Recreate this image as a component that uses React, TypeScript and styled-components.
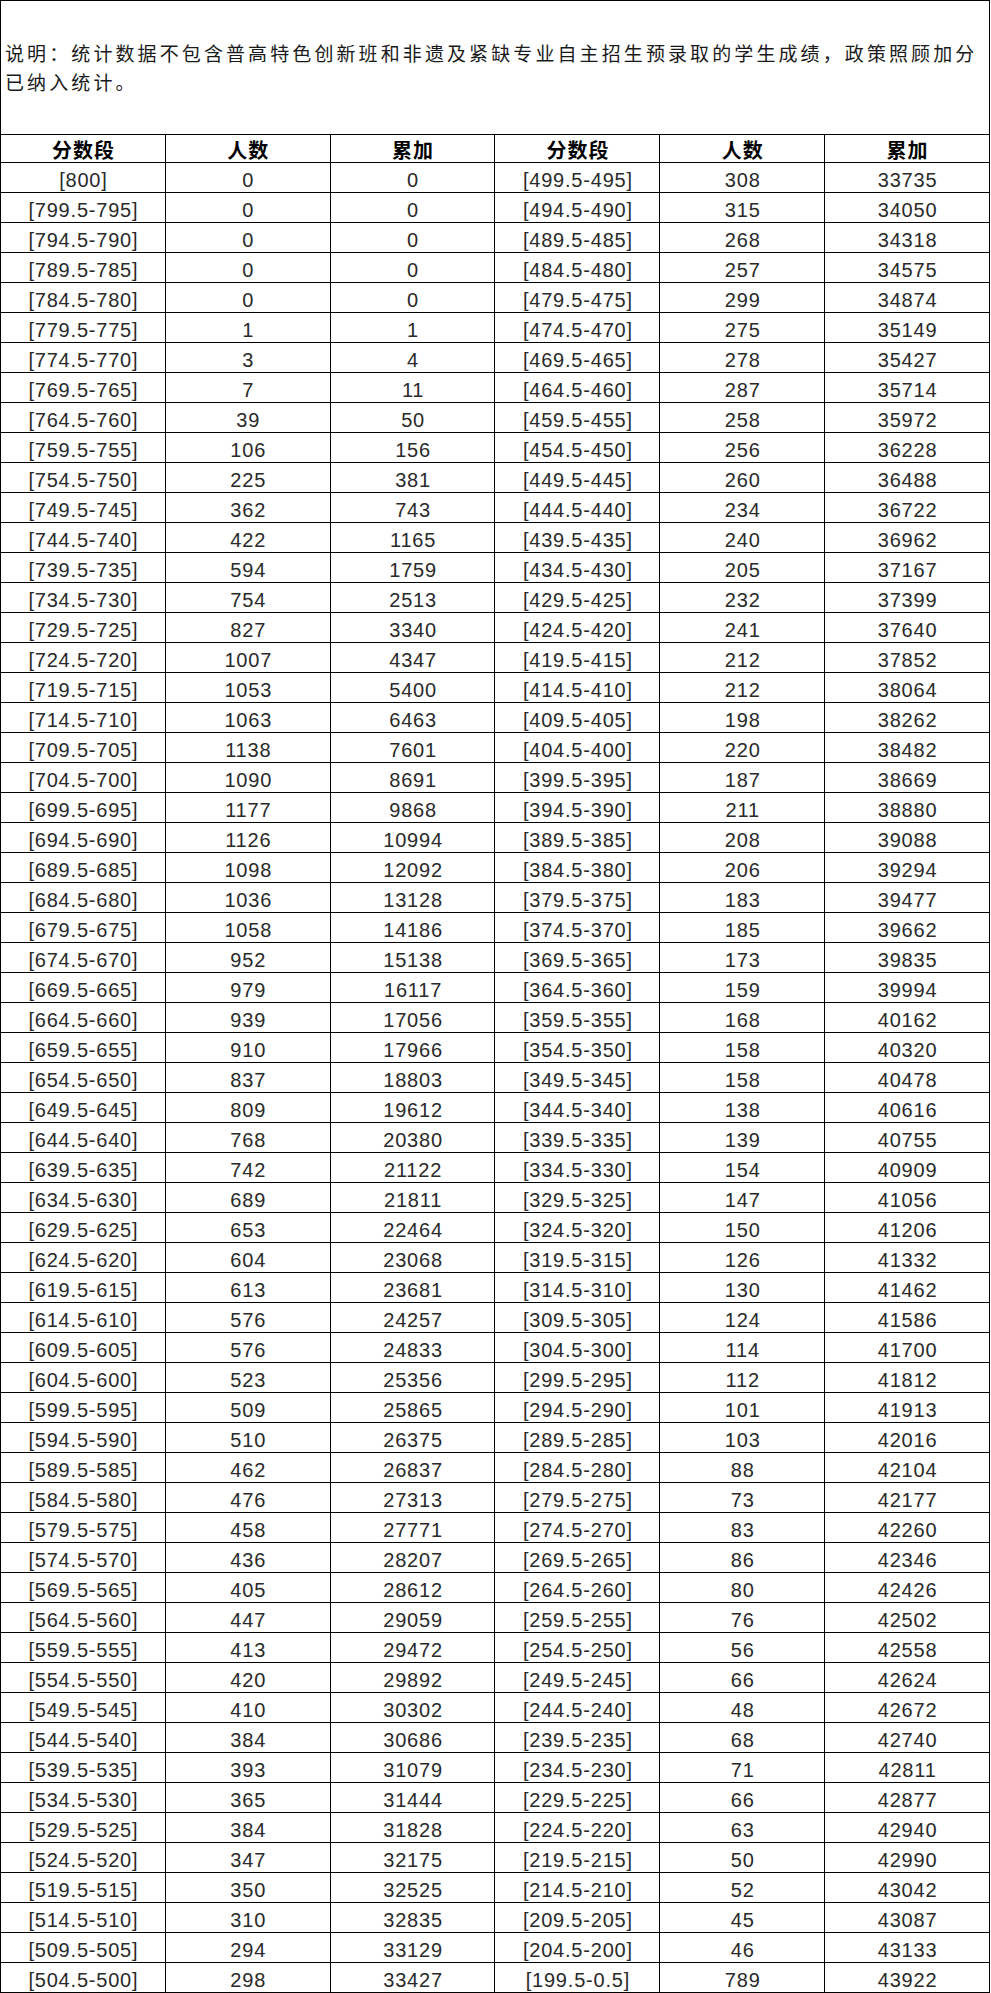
import React from "react";
import styled, { createGlobalStyle } from "styled-components";

const GlobalStyle = createGlobalStyle`
  html, body { margin: 0; padding: 0; background: #fff; }
  body { font-family: "Liberation Sans", "Noto Sans CJK SC", sans-serif; color: #000; }
`;

const Sheet = styled.div`
  width: 990px;
`;

const Note = styled.div`
  box-sizing: border-box;
  height: 134px;
  border: 1px solid #000;
  border-bottom: none;
  padding: 37px 0 0 4px;
  font-family: "Noto Sans CJK SC", sans-serif;
  font-size: 19px;
  letter-spacing: 3.1px;
  line-height: 29px;
  color: #1a1a1a;
  white-space: nowrap;
`;

const Table = styled.table`
  width: 990px;
  border-collapse: collapse;
  table-layout: fixed;
`;

const HeadRow = styled.tr`
  height: 28px;
`;

const Row = styled.tr`
  height: 30px;
`;

const Th = styled.th`
  border: 1px solid #000;
  padding: 2px 0 0 1px;
  font-family: "Noto Sans CJK SC", sans-serif;
  font-weight: 700;
  font-size: 20px;
  letter-spacing: 1px;
  line-height: 24px;
  text-align: center;
  color: #000;
`;

const Td = styled.td`
  border: 1px solid #000;
  padding: 5px 0 0 1px;
  font-size: 20px;
  letter-spacing: 0.8px;
  line-height: 24px;
  text-align: center;
  color: #2a2a2a;
  vertical-align: top;
`;

const leftCounts = [
  0, 0, 0, 0, 0, 1, 3, 7, 39, 106, 225, 362, 422, 594, 754, 827, 1007, 1053,
  1063, 1138, 1090, 1177, 1126, 1098, 1036, 1058, 952, 979, 939, 910, 837, 809,
  768, 742, 689, 653, 604, 613, 576, 576, 523, 509, 510, 462, 476, 458, 436,
  405, 447, 413, 420, 410, 384, 393, 365, 384, 347, 350, 310, 294, 298,
];

const rightCounts = [
  308, 315, 268, 257, 299, 275, 278, 287, 258, 256, 260, 234, 240, 205, 232,
  241, 212, 212, 198, 220, 187, 211, 208, 206, 183, 185, 173, 159, 168, 158,
  158, 138, 139, 154, 147, 150, 126, 130, 124, 114, 112, 101, 103, 88, 73, 83,
  86, 80, 76, 56, 66, 48, 68, 71, 66, 63, 50, 52, 45, 46, 789,
];

type Entry = { range: string; count: number; total: number };

function buildRows(): Array<[Entry, Entry]> {
  const left: Entry[] = [];
  let sum = 0;
  leftCounts.forEach((c, i) => {
    sum += c;
    const range =
      i === 0 ? "[800]" : `[${800 - 5 * (i - 1) - 0.5}-${800 - 5 * i}]`;
    left.push({ range, count: c, total: sum });
  });
  const right: Entry[] = [];
  rightCounts.forEach((c, j) => {
    sum += c;
    const range =
      j === rightCounts.length - 1
        ? "[199.5-0.5]"
        : `[${499.5 - 5 * j}-${495 - 5 * j}]`;
    right.push({ range, count: c, total: sum });
  });
  return left.map((l, i) => [l, right[i]]);
}

const rows = buildRows();

export default function App() {
  return (
    <>
      <GlobalStyle />
      <Sheet>
        <Note>
          说明：统计数据不包含普高特色创新班和非遗及紧缺专业自主招生预录取的学生成绩，政策照顾加分
          <br />
          已纳入统计。
        </Note>
        <Table>
          <thead>
            <HeadRow>
              <Th>分数段</Th>
              <Th>人数</Th>
              <Th>累加</Th>
              <Th>分数段</Th>
              <Th>人数</Th>
              <Th>累加</Th>
            </HeadRow>
          </thead>
          <tbody>
            {rows.map(([l, r]) => (
              <Row key={l.range}>
                <Td>{l.range}</Td>
                <Td>{l.count}</Td>
                <Td>{l.total}</Td>
                <Td>{r.range}</Td>
                <Td>{r.count}</Td>
                <Td>{r.total}</Td>
              </Row>
            ))}
          </tbody>
        </Table>
      </Sheet>
    </>
  );
}
